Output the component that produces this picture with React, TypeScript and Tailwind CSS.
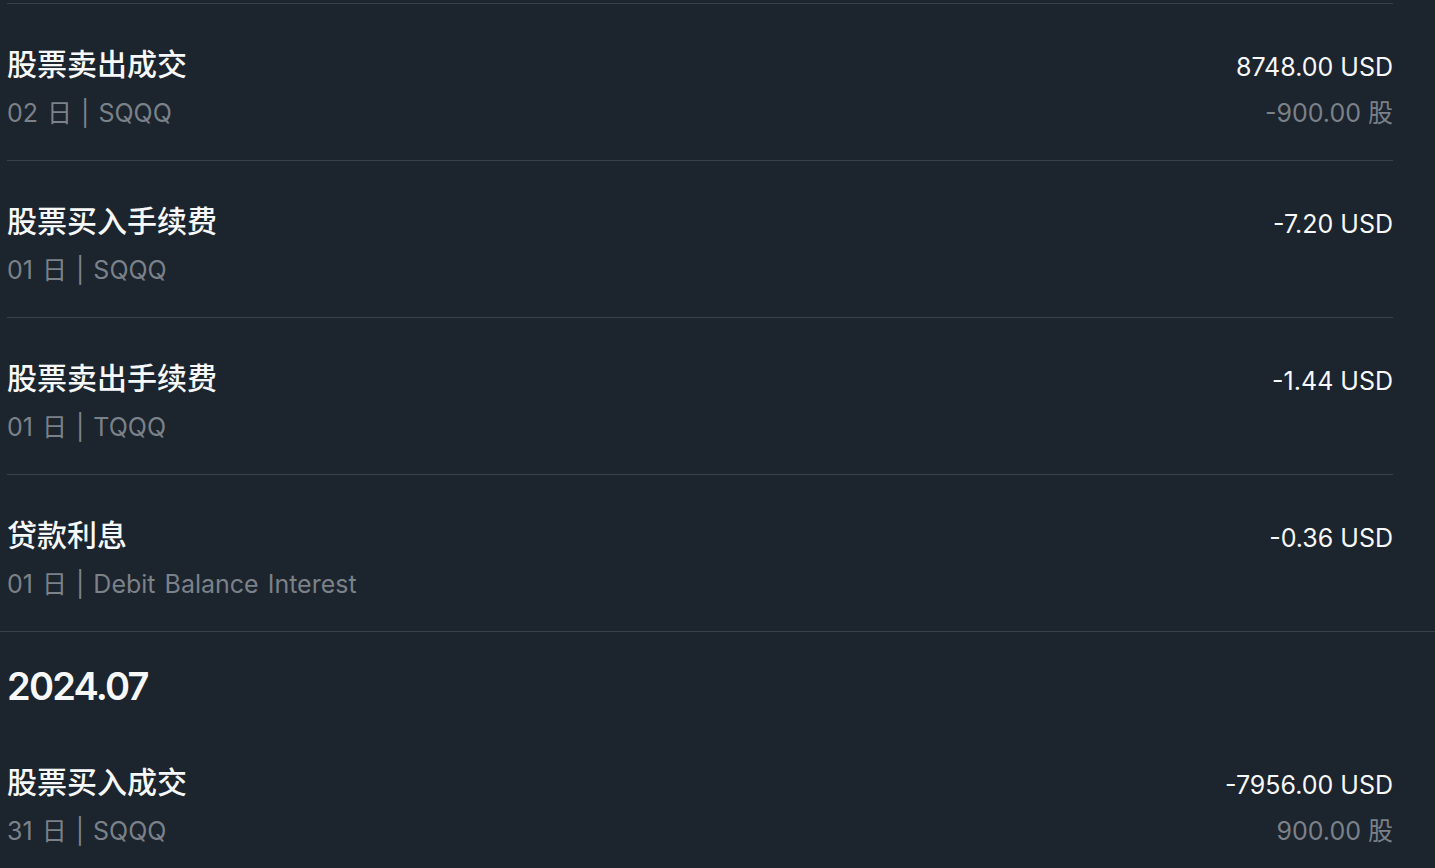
const font = {
  fontFamily: 'Inter, "Noto Sans CJK SC", sans-serif',
};

type Entry = {
  title: string;
  sub: string;
  amount: string;
  qty?: string;
};

const june: Entry[] = [
  { title: "股票卖出成交", sub: "02 日 | SQQQ", amount: "8748.00 USD", qty: "-900.00 股" },
  { title: "股票买入手续费", sub: "01 日 | SQQQ", amount: "-7.20 USD" },
  { title: "股票卖出手续费", sub: "01 日 | TQQQ", amount: "-1.44 USD" },
  { title: "贷款利息", sub: "01 日 | Debit Balance Interest", amount: "-0.36 USD" },
];

const july: Entry[] = [
  { title: "股票买入成交", sub: "31 日 | SQQQ", amount: "-7956.00 USD", qty: "900.00 股" },
];

const Row = ({ entry, last }: { entry: Entry; last?: boolean }) => {
  return (
    <div
      className={
        last
          ? "flex items-start justify-between pt-[42px] pb-[31px]"
          : "flex items-start justify-between border-b border-[#394049] pt-[42px] pb-[31px]"
      }
    >
      <div className="flex flex-col gap-[15px]">
        <div className="text-[30px] leading-[36px] font-medium text-[#f7f8f9]">{entry.title}</div>
        <div className="text-[25px] leading-[32px] text-[#7b8189] [word-spacing:2px]">{entry.sub}</div>
      </div>
      <div className="flex flex-col items-end gap-[14px] pt-[5px]">
        <div className="text-[25px] leading-[32px] text-[#f7f8f9]">{entry.amount}</div>
        {entry.qty && (
          <div className="text-[25px] leading-[32px] text-[#7b8189]">{entry.qty}</div>
        )}
      </div>
    </div>
  );
};

export default function App() {
  return (
    <div className="h-[868px] w-[1435px] overflow-hidden bg-[#1c242d]" style={font}>
      <div className="h-[3px]" />
      <div className="border-b border-[#394049]">
        <div className="ml-[7px] mr-[42px] border-t border-[#394049]">
          {june.map((e, i) => (
            <Row key={e.title + e.sub} entry={e} last={i === june.length - 1} />
          ))}
        </div>
      </div>
      <div className="ml-[7px] mr-[42px]">
        <div className="pt-[30px] text-[38px] leading-[48px] font-semibold tracking-[-1.8px] text-[#f7f8f9]">
          2024.07
        </div>
        <div className="mt-[12px]">
          {july.map((e) => (
            <Row key={e.title + e.sub} entry={e} last />
          ))}
        </div>
      </div>
    </div>
  );
}
